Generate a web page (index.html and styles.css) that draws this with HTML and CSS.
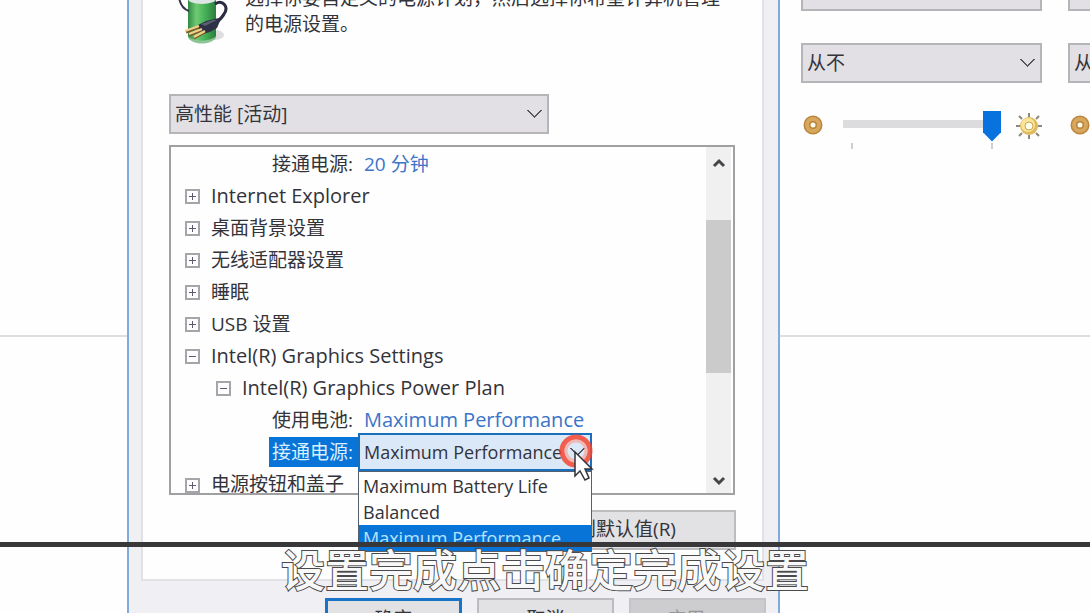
FILE: index.html
```html
<!DOCTYPE html>
<html lang="zh-CN">
<head>
  <meta charset="UTF-8">
  <meta name="viewport" content="width=device-width, initial-scale=1.0">
  <title>电源选项</title>
  <link rel="stylesheet" href="styles.css">
</head>
<body>
  <div class="desktop">
    <div class="pane"></div>

    <main class="dialog">
      <div class="tab-page">
        <div class="intro">
          <svg class="battery" width="54" height="60" viewBox="0 0 54 60">
            <defs>
              <linearGradient id="green" x1="0" x2="1" y1="0" y2="0">
                <stop offset="0" stop-color="#2f8a43"/>
                <stop offset=".3" stop-color="#6fca74"/>
                <stop offset=".6" stop-color="#45b257"/>
                <stop offset="1" stop-color="#2a7d3f"/>
              </linearGradient>
            </defs>
            <ellipse cx="38" cy="50" rx="9" ry="5" fill="#dededf"/>
            <path d="M11 14V51C11 60 39 60 39 51V14Z" fill="url(#green)"/>
            <path d="M11 51C13 61 37 61 39 51C34 57 15 57 11 51Z" fill="#8fc596"/>
            <ellipse cx="25" cy="14" rx="14" ry="5" fill="#dfe5e4"/>
            <path d="M2 12C3 20 6 24 12 26" fill="none" stroke="#34364a" stroke-width="2"/>
            <path d="M38 19C46 14 52 22 47 29C45 33 42 35 38 39" fill="none" stroke="#292b40" stroke-width="3"/>
            <path d="M21 40L29 36L42 33L43 36L40 43L33 47L26 49L21 45Z" fill="#2e3045"/>
            <path d="M24 39L36 35L40 35L28 41Z" fill="#5c5f72"/>
            <path d="M9 47L22 42M12 50L25 45M17 53L28 47" stroke="#7a5928" stroke-width="3"/>
            <path d="M8 46L22 41M12 49L25 44M17 52L28 46" stroke="#efd28b" stroke-width="2"/>
          </svg>
          <p>选择你要自定义的电源计划，然后选择你希望计算机管理的电源设置。</p>
        </div>

        <select class="combo plan" aria-label="电源计划">
          <option>高性能 [活动]</option>
        </select>

        <div class="tree-box">
          <ul class="tree">
            <li class="setting"><span class="name">接通电源:</span><a href="#">20 分钟</a></li>
            <li lang="en"><button class="toggle plus" aria-label="展开"></button>Internet Explorer</li>
            <li><button class="toggle plus" aria-label="展开"></button>桌面背景设置</li>
            <li><button class="toggle plus" aria-label="展开"></button>无线适配器设置</li>
            <li><button class="toggle plus" aria-label="展开"></button>睡眠</li>
            <li><button class="toggle plus" aria-label="展开"></button>USB 设置</li>
            <li lang="en"><button class="toggle" aria-label="折叠"></button>Intel(R) Graphics Settings</li>
            <li lang="en" class="child"><button class="toggle" aria-label="折叠"></button>Intel(R) Graphics Power Plan</li>
            <li class="setting"><span class="name">使用电池:</span><a href="#" lang="en">Maximum Performance</a></li>
            <li class="setting">
              <label class="name selected" for="pluggedIn">接通电源:</label>
              <div class="picker">
                <select id="pluggedIn">
                  <option>Maximum Performance</option>
                </select>
                <ul class="menu" role="listbox">
                  <li role="option">Maximum Battery Life</li>
                  <li role="option">Balanced</li>
                  <li role="option" aria-selected="true">Maximum Performance</li>
                </ul>
                <svg class="pointer" width="36" height="50" viewBox="0 0 36 50">
                  <circle cx="17" cy="18" r="14" fill="none" stroke="#f4452f" stroke-opacity=".85" stroke-width="5"/>
                  <circle cx="17" cy="18" r="10" fill="none" stroke="#ff9a8a" stroke-opacity=".6" stroke-width="3"/>
                  <path d="M16 19V43L21 38L26 47L30 45L26 36H33Z" fill="#fff" stroke="#33333a" stroke-width="1.5"/>
                </svg>
              </div>
            </li>
            <li class="cut"><button class="toggle plus" aria-label="展开"></button>电源按钮和盖子</li>
          </ul>
          <div class="scrollbar">
            <button aria-label="向上滚动"><svg width="14" height="10" viewBox="0 0 14 10"><path d="M2 8L7 3L12 8"/></svg></button>
            <div class="thumb"></div>
            <button aria-label="向下滚动"><svg width="14" height="10" viewBox="0 0 14 10"><path d="M2 2L7 7L12 2"/></svg></button>
          </div>
        </div>

        <button class="btn restore">还原计划默认值(R)</button>
      </div>

      <div class="actions">
        <button class="btn primary">确定</button>
        <button class="btn">取消</button>
        <button class="btn" disabled>应用(A)</button>
      </div>
    </main>

    <div class="pane plan-settings">
      <div class="column">
        <select class="combo" aria-label="关闭显示器"><option>15 分钟</option></select>
        <select class="combo" aria-label="使计算机进入睡眠状态"><option>从不</option></select>
        <div class="brightness">
          <svg width="20" height="20" viewBox="0 0 20 20"><circle cx="10" cy="10" r="6" fill="#fffaf0" stroke="#b9853a" stroke-width="7"/><circle cx="10" cy="10" r="6" fill="none" stroke="#d6a75d" stroke-width="4"/></svg>
          <div class="slider">
            <input type="range" min="0" max="100" value="100" aria-label="亮度">
            <div class="ticks"></div>
          </div>
          <svg class="sun" width="26" height="26" viewBox="0 0 26 26"><path d="M13 0V4M13 22V26M0 13H4M22 13H26M3 3L6 6M20 20L23 23M3 23L6 20M20 6L23 3" stroke="#8f887c" stroke-width="2"/><circle cx="13" cy="13" r="9" fill="#dfb95c"/><circle cx="12" cy="12" r="7" fill="#f8e59a"/><circle cx="13" cy="13" r="4" fill="#fffdf0" stroke="#cda446"/></svg>
        </div>
      </div>
      <div class="column">
        <select class="combo" aria-label="关闭显示器"><option>从不</option></select>
        <select class="combo" aria-label="使计算机进入睡眠状态"><option>从不</option></select>
        <div class="brightness">
          <svg width="20" height="20" viewBox="0 0 20 20"><circle cx="10" cy="10" r="6" fill="#fffaf0" stroke="#b9853a" stroke-width="7"/><circle cx="10" cy="10" r="6" fill="none" stroke="#d6a75d" stroke-width="4"/></svg>
        </div>
      </div>
    </div>
  </div>

  <div class="caption">设置完成点击确定完成设置</div>
</body>
</html>
```

FILE: styles.css
```css
* {
  box-sizing: border-box;
}
body {
  margin: 0;
  height: 100vh;
  overflow: hidden;
  position: relative;
  background: #fefefe;
  color: #33333a;
  font-family: "Open Sans", "Noto Sans CJK SC", sans-serif;
  font-size: 19px;
}
ul, p {
  margin: 0;
  padding: 0;
  list-style: none;
}
button, select {
  font: inherit;
  color: inherit;
}
.desktop {
  display: grid;
  grid-template-columns: minmax(0, 127fr) minmax(0, 653fr) minmax(0, 310fr);
  height: 100%;
}
.pane {
  height: 337px;
  border-bottom: 2px solid #dedede;
}

/* Dialog */
.dialog {
  height: 640px;
  padding: 0 14px 0 12px;
  background: #f0eff4;
  border: solid #7facdb;
  border-width: 0 2px;
}
.tab-page {
  display: flow-root;
  height: 581px;
  padding: 0 26px;
  background: #fefefe;
  border: 2px solid #e2e1e5;
  border-top: none;
}
.intro {
  display: flex;
  gap: 14px;
  margin: -15px 0 0 8px;
}
.battery {
  flex-shrink: 0;
}
.intro p {
  flex: 1;
  line-height: 26px;
}
.combo {
  appearance: none;
  display: block;
  width: 100%;
  height: 40px;
  padding: 0 4px;
  border: 2px solid #b5b5b8;
  border-radius: 0;
  background: #e2e0e5;
}
.combo, .picker select {
  background-image: linear-gradient(45deg, transparent 44%, #55555a 44%, #55555a 60%, transparent 60%), linear-gradient(-45deg, transparent 44%, #55555a 44%, #55555a 60%, transparent 60%);
  background-repeat: no-repeat;
  background-size: 8px 8px;
  background-position: right 12px center, right 5px center;
}
.plan {
  width: 67%;
  margin-top: 49px;
}

/* Settings tree */
.tree-box {
  display: flex;
  margin: 11px 1px 0 0;
  border: 2px solid #a0a0a3;
}
.tree {
  flex: 1;
  min-width: 0;
  padding-top: 1px;
}
.tree > li {
  display: flex;
  align-items: center;
  gap: 11px;
  height: 32px;
  padding-left: 14px;
  line-height: 32px;
  white-space: nowrap;
}
.tree [lang="en"] {
  font-size: 20px;
}
.tree > .child {
  padding-left: 45px;
}
.tree > .setting {
  gap: 0;
  padding-left: 98px;
}
.tree > .cut {
  height: 25px;
  align-items: flex-start;
  overflow: hidden;
}
.cut .toggle {
  margin-top: 10px;
}
.tree a {
  padding-left: 6px;
  color: #3b74c8;
  text-decoration: none;
}
.name {
  line-height: 30px;
  padding: 0 5px 0 3px;
}
.selected {
  background: #0874d8;
  color: #d8f0ff;
}
.toggle {
  flex-shrink: 0;
  width: 15px;
  height: 15px;
  padding: 0;
  border: 2px solid #a5a5ab;
  background: linear-gradient(#5c5c70, #5c5c70) center / 7px 1px no-repeat;
}
.toggle.plus {
  background: linear-gradient(#5c5c70, #5c5c70) center / 7px 1px no-repeat, linear-gradient(#5c5c70, #5c5c70) center / 1px 7px no-repeat;
}
.picker {
  position: relative;
  width: 234px;
  font-size: 18px;
}
.picker select {
  appearance: none;
  display: block;
  width: 100%;
  height: 38px;
  padding: 0 4px;
  border: 2px solid #176fbd;
  border-radius: 0;
  background-color: #dae8f7;
}
.menu {
  position: absolute;
  z-index: 1;
  top: 100%;
  left: 0;
  right: 0;
  padding-top: 1px;
  background: #fefefe;
  border: 1px solid #55606c;
}
.menu li {
  height: 26px;
  padding-left: 4px;
  line-height: 26px;
}
.menu [aria-selected] {
  background: #0874d8;
  color: #b9e2ff;
}
.pointer {
  position: absolute;
  z-index: 2;
  top: 0;
  right: -3px;
}
.scrollbar {
  display: flex;
  flex-direction: column;
  width: 25px;
  margin-right: 2px;
  background: #f0f0f1;
}
.scrollbar button {
  height: 28px;
  padding: 0;
  border: none;
  background: none;
}
.scrollbar path {
  fill: none;
  stroke: #45454a;
  stroke-width: 3;
}
.thumb {
  height: 153px;
  margin: 45px 0 auto;
  background: #cbcbcc;
}

/* Buttons */
.btn {
  height: 40px;
  padding: 0;
  border: 2px solid #bdbdc0;
  background: #e2e1e4;
}
.restore {
  display: block;
  width: 276px;
  margin: 15px 0 0 auto;
  padding-bottom: 4px;
}
.actions {
  display: grid;
  grid-template-columns: repeat(3, 137px);
  justify-content: end;
  gap: 15px;
  margin: 17px -2px 0 0;
}
.btn.primary {
  border: 3px solid #1874c8;
}
.btn:disabled {
  background: #cdcdcf;
  border-color: #c4c4c6;
  color: #97979a;
}

/* Plan settings behind the dialog */
.plan-settings {
  display: flex;
  gap: 26px;
  padding-left: 21px;
  overflow: hidden;
}
.column {
  display: flex;
  flex-direction: column;
  gap: 32px;
  flex: 0 0 241px;
  margin-top: -29px;
}
.brightness {
  display: flex;
  align-items: flex-start;
  padding: 0 0 0 2px;
  margin-top: -2px;
}
.brightness svg {
  margin-top: 2px;
}
.brightness .sun {
  margin-top: 0;
}
.slider {
  flex: 1;
  margin: -3px 15px 0 20px;
}
.slider input {
  appearance: none;
  display: block;
  width: 100%;
  height: 32px;
  margin: 0;
  background: linear-gradient(#dcdcdf, #dcdcdf) 0 10px / 100% 8px no-repeat;
}
.slider input::-webkit-slider-thumb {
  appearance: none;
  width: 18px;
  height: 31px;
  background: #0873de;
  clip-path: polygon(0 0, 100% 0, 100% 70%, 50% 100%, 0 70%);
}
.ticks {
  height: 6px;
  margin: 1px 8px;
  border: solid #cfcfd2;
  border-width: 0 2px;
}

/* Video caption */
.caption {
  position: absolute;
  z-index: 3;
  left: 0;
  right: 0;
  bottom: 0;
  height: 71px;
  border-top: 5px solid #38383a;
  color: #f8f8f8;
  font-size: 44px;
  font-weight: 500;
  line-height: 46px;
  text-align: center;
  -webkit-text-stroke: 2px #4a4a4c;
  paint-order: stroke fill;
}
```
